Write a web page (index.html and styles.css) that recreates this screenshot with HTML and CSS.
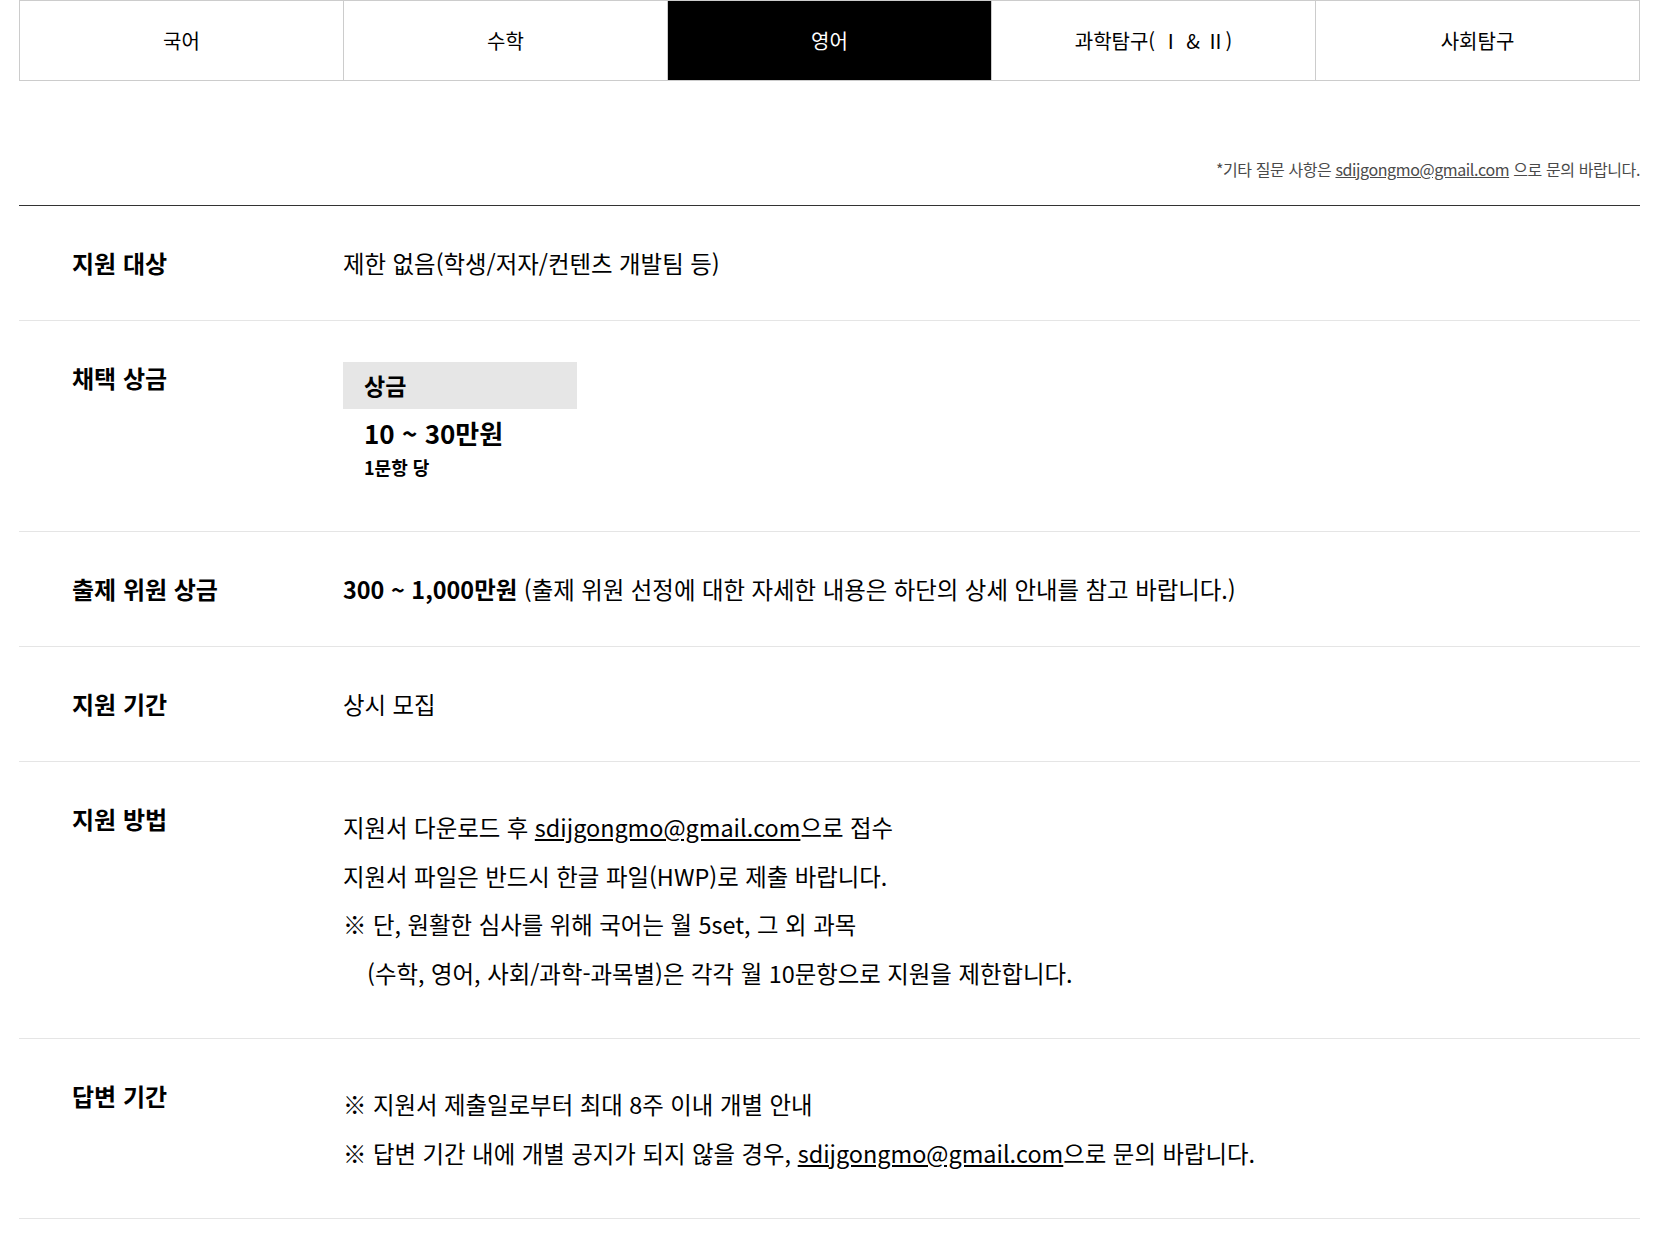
FILE: index.html
```html
<!DOCTYPE html>
<html lang="ko">

  <head>
    <meta charset="UTF-8">
    <meta name="viewport" content="width=device-width, initial-scale=1.0">
    <title>공모 안내 - 영어</title>
    <link rel="stylesheet" href="styles.css">
  </head>

  <body>
    <div class="wrap">
      <ul class="tabs">
        <li><a href="#">국어</a></li>
        <li><a href="#">수학</a></li>
        <li class="on"><a href="#">영어</a></li>
        <li><a href="#">과학탐구( Ⅰ &amp; Ⅱ)</a></li>
        <li><a href="#">사회탐구</a></li>
      </ul>

      <p class="note">*기타 질문 사항은 <a href="mailto:sdijgongmo@gmail.com">sdijgongmo@gmail.com</a> 으로 문의 바랍니다.</p>

      <div class="info">
        <div class="row">
          <div class="label">지원 대상</div>
          <div class="value">제한 없음(학생/저자/컨텐츠 개발팀 등)</div>
        </div>

        <div class="row">
          <div class="label">채택 상금</div>
          <div class="value">
            <div class="prize">
              <div class="prize-head">상금</div>
              <div class="prize-amount">10 ~ 30만원</div>
              <div class="prize-unit">1문항 당</div>
            </div>
          </div>
        </div>

        <div class="row">
          <div class="label">출제 위원 상금</div>
          <div class="value"><strong>300 ~ 1,000만원</strong> (출제 위원 선정에 대한 자세한 내용은 하단의 상세 안내를 참고 바랍니다.)</div>
        </div>

        <div class="row">
          <div class="label">지원 기간</div>
          <div class="value">상시 모집</div>
        </div>

        <div class="row">
          <div class="label">지원 방법</div>
          <ul class="value lines">
            <li>지원서 다운로드 후 <a href="mailto:sdijgongmo@gmail.com">sdijgongmo@gmail.com</a>으로 접수</li>
            <li>지원서 파일은 반드시 한글 파일(HWP)로 제출 바랍니다.</li>
            <li>※ 단, 원활한 심사를 위해 국어는 월 5set, 그 외 과목</li>
            <li class="indent">(수학, 영어, 사회/과학-과목별)은 각각 월 10문항으로 지원을 제한합니다.</li>
          </ul>
        </div>

        <div class="row">
          <div class="label">답변 기간</div>
          <ul class="value lines">
            <li>※ 지원서 제출일로부터 최대 8주 이내 개별 안내</li>
            <li>※ 답변 기간 내에 개별 공지가 되지 않을 경우, <a href="mailto:sdijgongmo@gmail.com">sdijgongmo@gmail.com</a>으로 문의 바랍니다.</li>
          </ul>
        </div>
      </div>
    </div>
  </body>

</html>
```

FILE: styles.css
```css
html {
  font-family: "Noto Sans CJK KR", "Noto Sans", sans-serif;
  color: #000;
}

body {
  margin: 0;
  background: #fff;
}

a {
  color: inherit;
}

.wrap {
  width: 1621px;
  margin-left: 19px;
}

/* subject tabs */
.tabs {
  display: flex;
  list-style: none;
  margin: 0;
  padding: 0;
  border: 1px solid #ccc;
}

.tabs li {
  flex: 1;
  border-left: 1px solid #ccc;
}

.tabs li:first-child {
  border-left: none;
}

.tabs a {
  display: flex;
  align-items: center;
  justify-content: center;
  height: 79px;
  font-size: 20px;
  text-decoration: none;
  color: #000;
}

.tabs .on a {
  background: #000;
  color: #fff;
}

.note {
  margin: 0;
  padding: 77px 0 25px;
  text-align: right;
  font-size: 16px;
  line-height: 22px;
  color: #4a4a4a;
  letter-spacing: -0.4px;
}

/* info table */
.info {
  border-top: 1px solid #333;
}

.row {
  display: flex;
  padding: 41px 0 41px 53px;
  border-bottom: 1px solid #e5e5e5;
}

.label {
  width: 271px;
  flex-shrink: 0;
  font-size: 24px;
  font-weight: bold;
  line-height: 32px;
}

.value {
  font-size: 23.4px;
  line-height: 32px;
}

.value strong {
  font-weight: bold;
}

.lines {
  list-style: none;
  margin: 0;
  padding: 0;
  line-height: 48.5px;
}

.lines .indent {
  padding-left: 24px;
}

.prize {
  width: 234px;
}

.prize-head {
  background: #e6e6e6;
  padding: 0 21px;
  height: 47px;
  line-height: 47px;
  font-size: 23px;
  font-weight: bold;
}

.prize-amount {
  margin-top: 6px;
  padding-left: 21px;
  font-size: 26px;
  font-weight: bold;
  line-height: 36px;
}

.prize-unit {
  margin: 4px 0 11px;
  padding-left: 21px;
  font-size: 18px;
  font-weight: bold;
  line-height: 24px;
}
```
